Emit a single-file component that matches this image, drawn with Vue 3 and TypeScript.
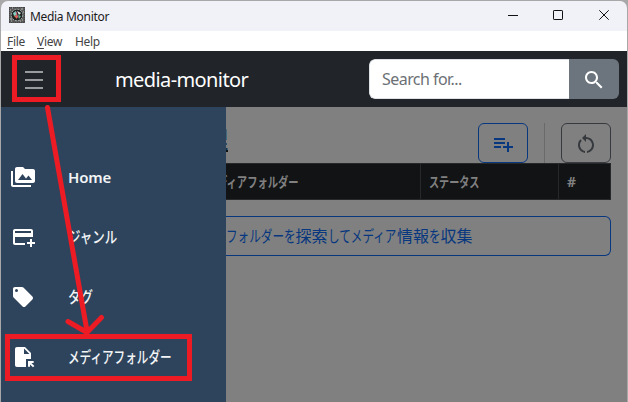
<script setup lang="ts">
interface MenuItem {
  label: string
  scale: string
  icon: string
}

const items: MenuItem[] = [
  { label: 'Home', scale: 'latin', icon: 'M2 6H0v5h.01L0 20c0 1.1.9 2 2 2h18v-2H2V6zm20-2h-8l-2-2H6c-1.1 0-1.99.9-1.99 2L4 16c0 1.1.9 2 2 2h16c1.1 0 2-.9 2-2V6c0-1.1-.9-2-2-2zM7 15l4.5-6 3.5 4.51 2.5-3.01L21 15H7z' },
  { label: 'ジャンル', scale: 'kana-wide', icon: 'M20 4H4c-1.11 0-1.99.89-1.99 2L2 18c0 1.11.89 2 2 2h10v-2H4v-6h18V6c0-1.11-.89-2-2-2zm0 4H4V6h16v2zm4 9v2h-3v3h-2v-3h-3v-2h3v-3h2v3h3z' },
  { label: 'タグ', scale: 'kana-wide', icon: 'M5.5,7A1.5,1.5 0 0,1 4,5.5A1.5,1.5 0 0,1 5.5,4A1.5,1.5 0 0,1 7,5.5A1.5,1.5 0 0,1 5.5,7M21.41,11.58L12.41,2.58C12.05,2.22 11.55,2 11,2H4C2.89,2 2,2.89 2,4V11C2,11.55 2.22,12.05 2.59,12.41L11.58,21.41C11.95,21.77 12.45,22 13,22C13.55,22 14.05,21.77 14.41,21.41L21.41,14.41C21.78,14.05 22,13.55 22,13C22,12.44 21.77,11.94 21.41,11.58Z' },
  { label: 'メディアフォルダー', scale: 'kana', icon: 'M14,2H6C4.9,2,4.01,2.9,4.01,4L4,20c0,1.1,0.89,2,1.99,2H15v-8h5V8L14,2z M13,9V3.5L18.5,9H13z M17,21.66V16h5.66v2h-2.24l2.95,2.95l-1.41,1.41L19,19.41l0,2.24H17z' },
]
</script>

<template>
  <div class="window">
    <header class="titlebar">
      <svg class="app-icon" width="16" height="16" viewBox="0 0 16 16">
        <rect width="16" height="16" fill="#5a5a5a" />
        <path d="M0 .5H16M.5 0V16M15.5 0V16M0 15.5H16" stroke="#444" stroke-dasharray="1 1" />
        <path d="M1 3h1M3 1h1M12 2h2M1 12h2M13 13h1M14 5h1M2 14h1M11 14h1" stroke="#bbb" />
        <circle cx="8" cy="8" r="5.8" fill="#222" stroke="#a9b5b0" stroke-dasharray="2 1" />
        <path d="M4 6l3-2 1 4-3 1z" fill="#7fcfc0" />
        <path d="M8 4l4 2-2 2z" fill="#d8e6e0" />
        <path d="M5 9l3-1v4z" fill="#e06a4c" />
        <path d="M9 8l3 1-2 3z" fill="#58b58b" />
        <path d="M7 5l2 6" stroke="#d8577a" />
      </svg>
      <span class="app-title">Media Monitor</span>
      <svg class="controls" width="101" height="10" viewBox="0 0 101 10" fill="none" stroke="#111">
        <path d="M0 5.5H10" />
        <rect x="45.5" y=".5" width="9" height="9" rx=".6" />
        <path d="M91.3 .3l9.4 9.4M100.7 .3l-9.4 9.4" />
      </svg>
    </header>
    <nav class="menubar">
      <span class="m-file"><u>F</u>ile</span>
      <span class="m-view"><u>V</u>iew</span>
      <span>Help</span>
    </nav>
    <div class="navbar">
      <div class="burger"><i></i><i></i><i></i></div>
      <span class="brand">media-monitor</span>
      <div class="search">
        <div class="field"><span>Search for...</span></div>
        <div class="go">
          <svg width="24" height="24" viewBox="0 0 24 24" fill="#fff"><path d="M15.5 14h-.79l-.28-.27C15.41 12.59 16 11.11 16 9.5 16 5.91 13.09 3 9.5 3S3 5.91 3 9.5 5.91 16 9.5 16c1.61 0 3.09-.59 4.23-1.57l.27.28v.79l5 4.99L20.49 19l-4.99-5zm-6 0C7.01 14 5 11.99 5 9.5S7.01 5 9.5 5 14 7.01 14 9.5 11.99 14 9.5 14z" /></svg>
        </div>
      </div>
    </div>
    <div class="body">
      <aside class="sidebar">
        <div v-for="item in items" :key="item.label" class="item">
          <svg width="24" height="24" viewBox="0 0 24 24" fill="#fff"><path :d="item.icon" /></svg>
          <span :class="['label', item.scale]">{{ item.label }}</span>
        </div>
      </aside>
      <main class="content">
        <div class="toolbar">
          <h1>理</h1>
          <div class="btn blue">
            <svg width="24" height="24" viewBox="0 0 24 24" fill="currentColor"><path d="M3 16H10V14H3M18 14V10H16V14H12V16H16V20H18V16H22V14M14 6H3V8H14M14 10H3V12H14V10Z" /></svg>
          </div>
          <div class="rule"></div>
          <div class="btn gray">
            <svg width="24" height="24" viewBox="0 0 24 24" fill="currentColor"><path d="M12 5V2L8 6l4 4V7c3.31 0 6 2.69 6 6 0 2.97-2.17 5.43-5 5.91v2.02c3.95-.49 7-3.85 7-7.93 0-4.42-3.58-8-8-8zm-6 8c0-1.65.67-3.15 1.76-4.24L6.34 7.34C4.9 8.79 4 10.79 4 13c0 4.08 3.05 7.44 7 7.93v-2.02c-2.83-.48-5-2.94-5-5.91z" /></svg>
          </div>
        </div>
        <div class="thead">
          <div class="th folder"><span>ディアフォルダー</span></div>
          <div class="th status"><span>ステータス</span></div>
          <div class="th hash">#</div>
        </div>
        <div class="collect">
          <span class="k six"><span>フォルダーを</span></span>探索<span class="k six"><span>してメディア</span></span>情報<span class="k one"><span>を</span></span>収集
        </div>
      </main>
    </div>
    <svg class="marks" width="628" height="402" viewBox="0 0 628 402" fill="none" stroke="#ed1c24" stroke-width="5">
      <rect x="14.5" y="57.5" width="44" height="42" />
      <rect x="7.5" y="336.5" width="182" height="42" />
      <path d="M47.5 107.5L87 331M68 321.500L87 332.500L101.500 317.500" stroke-linecap="round" stroke-linejoin="round" />
    </svg>
  </div>
</template>

<style>
body { background: #aaa; overflow: hidden; }
</style>

<style scoped>
* { box-sizing: border-box; }
.window {
  position: relative;
  width: 628px;
  height: 402px;
  padding: 1px 1px 0;
  background: #a8a8a8;
  overflow: hidden;
  font-family: "Noto Sans", "Noto Sans CJK JP", sans-serif;
  display: flex;
  flex-direction: column;
}
.titlebar {
  height: 30px;
  flex: none;
  display: flex;
  align-items: center;
  padding: 0 18px 0 8px;
  background: #f1f1f8;
  border-radius: 7px 7px 0 0;
  font-size: 12px;
  color: #1b1b1b;
}
.app-icon { margin-top: -2px; }
.app-title { margin-left: 5px; letter-spacing: -0.32px; }
.controls { margin-left: auto; margin-top: -2px; }
.menubar {
  height: 20px;
  flex: none;
  display: flex;
  align-items: center;
  padding-left: 6px;
  background: #fff;
  font-size: 12px;
  color: #444;
  letter-spacing: -0.3px;
}
.menubar u { text-underline-offset: 2px; }
.m-file { width: 30px; }
.m-view { width: 38px; }
.navbar {
  height: 56px;
  flex: none;
  display: flex;
  align-items: center;
  padding: 0 8px 0 24px;
  background: #212529;
}
.burger { display: flex; flex-direction: column; gap: 6px; width: 18px; margin-top: 2px; }
.burger i { height: 2px; background: #999b9d; }
.brand { margin-left: 72px; color: #fff; font-size: 20px; letter-spacing: -0.6px; }
.search { margin-left: auto; display: flex; width: 250px; height: 40px; border-radius: 6px; overflow: hidden; }
.field {
  flex: 1;
  padding-left: 12px;
  background: #fff;
  border: 1px solid #dee2e6;
  border-right: 0;
  border-radius: 6px 0 0 6px;
  color: #6c7075;
  font-size: 16px;
  line-height: 38px;
  letter-spacing: -0.55px;
}
.go { width: 50px; background: #6c757d; display: flex; align-items: center; justify-content: center; padding-top: 2px; }
.body { flex: 1; min-height: 0; display: flex; }
.sidebar { width: 225px; flex: none; background: #2e445c; padding-top: 40px; }
.item { height: 60px; display: flex; align-items: center; padding-left: 10px; }
.label { margin-left: 33px; color: #f2f4f6; font-size: 16px; font-weight: 500; white-space: nowrap; transform-origin: left center; }
.latin { font-size: 15px; font-weight: 600; letter-spacing: -0.2px; }
.kana { transform: translateY(-1px) scaleX(0.725); }
.kana-wide { transform: translateY(-1px) scaleX(0.78); }
.content { flex: 1; min-width: 0; background: #808080; padding: 16px 16px 0 0; overflow: hidden; }
.toolbar { display: flex; height: 40px; }
h1 {
  margin: 0 auto 0 -21px;
  width: 23px;
  font-size: 23px;
  font-weight: 500;
  line-height: 33px;
  color: #103048;
  text-decoration: underline;
  text-decoration-color: #111;
}
.btn { width: 50px; height: 40px; border: 1px solid; border-radius: 6px; display: flex; align-items: center; justify-content: center; padding-top: 2px; }
.blue { color: #07377f; }
.gray { color: #363a3e; }
.rule { width: 1px; background: #6a6a6a; margin: 0 16px; }
.thead { display: flex; height: 37px; background: #111315; border: 1px solid #26282a; border-left: 0; color: #808080; font-size: 14px; font-weight: 700; line-height: 35px; }
.th { white-space: nowrap; }
.th span { display: inline-block; transform-origin: left center; }
.folder { flex: 1; min-width: 0; }
.folder span { transform: scaleX(0.735); margin-left: -9px; }
.status { width: 138px; border-left: 1px solid #26282a; padding-left: 8px; }
.status span { transform: scaleX(0.72); }
.hash { width: 52px; border-left: 1px solid #26282a; padding-left: 8px; }
.collect {
  height: 40px;
  margin-top: 16px;
  padding-bottom: 2px;
  display: flex;
  align-items: center;
  border: 1px solid #07377f;
  border-left: 0;
  border-radius: 0 6px 6px 0;
  color: #07377f;
  font-size: 16px;
  white-space: nowrap;
}
.k { display: block; flex: none; }
.k span { display: block; width: max-content; transform: scaleX(0.725); transform-origin: left center; }
.six { width: 69.500px; }
.one { width: 11.500px; }
.marks { position: absolute; left: 0; top: 0; }
</style>
